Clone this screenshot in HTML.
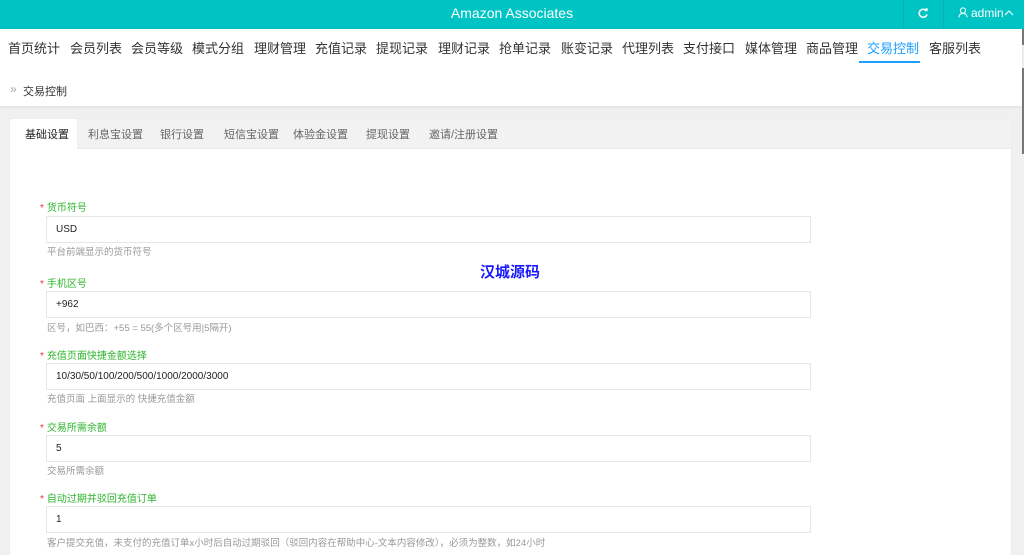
<!DOCTYPE html>
<html><head><meta charset="utf-8"><style>
*{margin:0;padding:0;box-sizing:border-box}
body{width:1024px;height:555px;overflow:hidden;position:relative;background:#f0f0f0;font-family:"Liberation Sans","Noto Sans CJK SC",sans-serif;color:#333}
.abs{position:absolute;white-space:nowrap}
#top{left:0;top:0;width:1024px;height:29px;background:#00c4c4}
#nav{left:0;top:29px;width:1022px;height:77px;background:#fff;box-shadow:0 1px 3px rgba(0,0,0,.08)}
.n{font-size:13px;top:38px;color:#333}
.tab{font-size:11px;top:126px;color:#666}
.lab{font-size:10px;color:#2db52d;left:40px}
.lab b{color:#e33;font-weight:normal;margin-right:3px}
.inp{left:46px;width:765px;height:27px;border:1px solid #e6e6e6;background:#fff;font-size:10px;padding:0 0 0 9px;line-height:25px;color:#222}
.help{left:47px;font-size:9.5px;color:#999}
</style></head><body>
<div class="abs" id="top"></div>
<div class="abs" style="left:0;top:4px;width:1024px;text-align:center;color:#fff;font-size:14px;line-height:18px">Amazon Associates</div>
<div class="abs" style="left:903px;top:0;width:1px;height:29px;background:#0fb0b0"></div>
<div class="abs" style="left:943px;top:0;width:1px;height:29px;background:#0fb0b0"></div>
<svg class="abs" style="left:917px;top:7px" width="12" height="12" viewBox="0 0 12 12"><path d="M9.5 4A4 4 0 1 0 10 7.5" fill="none" stroke="#fff" stroke-width="1.6"/><path d="M7 2.5L10.5 4.5 10.5 0.8Z" fill="#fff"/></svg>
<svg class="abs" style="left:958px;top:7px" width="10" height="11" viewBox="0 0 10 11"><circle cx="5" cy="3.5" r="2.6" fill="none" stroke="#fff" stroke-width="1"/><path d="M1 10.5Q1 6.5 5 6.5T9 10.5" fill="none" stroke="#fff" stroke-width="1"/></svg>
<div class="abs" style="left:971px;top:6px;color:#fff;font-size:12px">admin</div>
<svg class="abs" style="left:1004px;top:9px" width="10" height="7" viewBox="0 0 10 7"><path d="M1 6L5 2 9 6" fill="none" stroke="#fff" stroke-width="1"/></svg>
<div class="abs" id="nav"></div>
<div class="abs n" style="left:8px">首页统计</div>
<div class="abs n" style="left:70px">会员列表</div>
<div class="abs n" style="left:131px">会员等级</div>
<div class="abs n" style="left:192px">模式分组</div>
<div class="abs n" style="left:254px">理财管理</div>
<div class="abs n" style="left:315px">充值记录</div>
<div class="abs n" style="left:376px">提现记录</div>
<div class="abs n" style="left:438px">理财记录</div>
<div class="abs n" style="left:499px">抢单记录</div>
<div class="abs n" style="left:561px">账变记录</div>
<div class="abs n" style="left:622px">代理列表</div>
<div class="abs n" style="left:683px">支付接口</div>
<div class="abs n" style="left:745px">媒体管理</div>
<div class="abs n" style="left:806px">商品管理</div>
<div class="abs n" style="left:867px;color:#1e9fff">交易控制</div>
<div class="abs n" style="left:929px">客服列表</div>
<div class="abs" style="left:859px;top:61px;width:61px;height:2px;background:#1e9fff"></div>
<div class="abs" style="left:10px;top:82px;font-size:12px;color:#aaa">»</div>
<div class="abs" style="left:23px;top:83px;font-size:11px;color:#333">交易控制</div>
<div class="abs" style="left:10px;top:119px;width:1001px;height:436px;background:#fff;box-shadow:0 0 2px rgba(0,0,0,.06)"></div>
<div class="abs" style="left:10px;top:119px;width:1001px;height:30px;background:#f2f2f2;border-bottom:1px solid #eaeaea"></div>
<div class="abs" style="left:10px;top:119px;width:67px;height:31px;background:#fff"></div>
<div class="abs tab" style="left:25px;color:#222">基础设置</div>
<div class="abs tab" style="left:88px">利息宝设置</div>
<div class="abs tab" style="left:160px">银行设置</div>
<div class="abs tab" style="left:224px">短信宝设置</div>
<div class="abs tab" style="left:293px">体验金设置</div>
<div class="abs tab" style="left:366px">提现设置</div>
<div class="abs tab" style="left:429px">邀请/注册设置</div>

<div class="abs lab" style="top:199px"><b>*</b>货币符号</div>
<div class="abs inp" style="top:216px">USD</div>
<div class="abs help" style="top:244px">平台前端显示的货币符号</div>

<div class="abs lab" style="top:275px"><b>*</b>手机区号</div>
<div class="abs inp" style="top:291px">+962</div>
<div class="abs help" style="top:320px">区号，如巴西：+55 = 55(多个区号用|5隔开)</div>

<div class="abs lab" style="top:347px"><b>*</b>充值页面快捷金额选择</div>
<div class="abs inp" style="top:363px">10/30/50/100/200/500/1000/2000/3000</div>
<div class="abs help" style="top:391px">充值页面 上面显示的 快捷充值金额</div>

<div class="abs lab" style="top:419px"><b>*</b>交易所需余额</div>
<div class="abs inp" style="top:435px">5</div>
<div class="abs help" style="top:463px">交易所需余额</div>

<div class="abs lab" style="top:490px"><b>*</b>自动过期并驳回充值订单</div>
<div class="abs inp" style="top:506px">1</div>
<div class="abs help" style="top:535px">客户提交充值，未支付的充值订单x小时后自动过期驳回（驳回内容在帮助中心-文本内容修改），必须为整数，如24小时</div>

<div class="abs" style="left:480px;top:261px;font-size:15px;font-weight:bold;color:#1a1aff">汉城源码</div>
<div class="abs" style="left:1022px;top:29px;width:2px;height:16px;background:#777"></div>
<div class="abs" style="left:1022px;top:68px;width:2px;height:86px;background:#777"></div>
</body></html>
